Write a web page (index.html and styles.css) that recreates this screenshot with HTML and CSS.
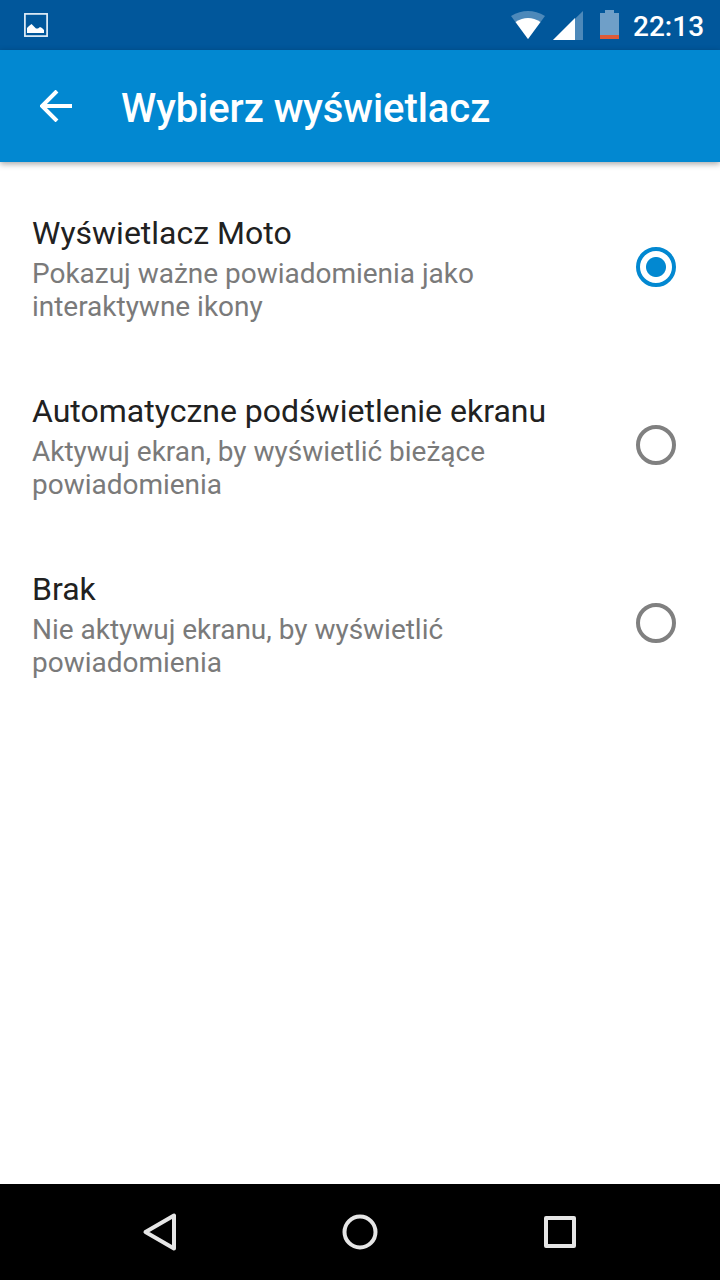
FILE: index.html
```html
<!DOCTYPE html>
<html lang="pl">
<head>
    <meta charset="UTF-8">
    <meta name="viewport" content="width=device-width, initial-scale=1.0">
    <title>Wybierz wyświetlacz</title>
    <link rel="stylesheet" href="styles.css">
</head>
<body>
    <div class="status">
        <svg class="status-image" width="24" height="24" viewBox="0 0 24 24">
            <rect x=".9" y=".9" width="22.2" height="22.2" fill="none" stroke="#e3eff8" stroke-width="1.7"/>
            <path d="M3 20v-5l2-2 2.500-2 2 2 2.500 2.500h2l2-1.500 2 1 2 2v3z" fill="#fff"/>
        </svg>
        <svg class="wifi" width="34" height="30" viewBox="0 0 34 30">
            <path d="M0 6Q17-4 34 6L17 29z" fill="#4d89ba"/>
            <path d="M4.500 12Q17 4 29.500 12L17 29z" fill="#fff"/>
        </svg>
        <svg class="signal" width="30" height="30" viewBox="0 0 30 30">
            <path d="M30 1v29H0z" fill="#4d89ba"/>
            <path d="M22 8v22H0z" fill="#fff"/>
        </svg>
        <svg class="battery" width="19" height="30" viewBox="0 0 19 30">
            <path d="M0 3h5V0h9v3h5v26H0z" fill="#6f9fc8"/>
            <path d="M0 25h19v4H0z" fill="#dd5a38"/>
        </svg>
        <span class="clock">22:13</span>
    </div>
    <header class="bar">
        <svg width="32" height="32" viewBox="0 0 32 32">
            <path d="M32 16H3M17 1L2 16l15 15" fill="none" stroke="#fff" stroke-width="4"/>
        </svg>
        <h1>Wybierz wyświetlacz</h1>
    </header>
    <main class="options">
        <label class="option">
            <span class="text">
                <span class="name">Wyświetlacz Moto</span>
                <span class="info">Pokazuj ważne powiadomienia jako<br>interaktywne ikony</span>
            </span>
            <input type="radio" name="display" checked>
        </label>
        <label class="option">
            <span class="text">
                <span class="name">Automatyczne podświetlenie ekranu</span>
                <span class="info">Aktywuj ekran, by wyświetlić bieżące<br>powiadomienia</span>
            </span>
            <input type="radio" name="display">
        </label>
        <label class="option">
            <span class="text">
                <span class="name">Brak</span>
                <span class="info">Nie aktywuj ekranu, by wyświetlić<br>powiadomienia</span>
            </span>
            <input type="radio" name="display">
        </label>
    </main>
    <nav class="nav">
        <svg width="40" height="40" viewBox="0 0 40 40"><path d="M34 3.500v33L5.500 20z"/></svg>
        <svg width="40" height="40" viewBox="0 0 40 40"><circle cx="20" cy="20" r="15.500"/></svg>
        <svg width="40" height="40" viewBox="0 0 40 40"><rect x="6" y="6" width="28" height="28"/></svg>
    </nav>
</body>
</html>
```
FILE: styles.css
```css
body {
    display: flex;
    flex-direction: column;
    height: 1280px;
    margin: 0;
    font-family: Roboto, sans-serif;
    background-color: #fff;
}

.status {
    display: flex;
    align-items: center;
    box-sizing: border-box;
    height: 50px;
    padding: 0 16px 0 24px;
    background-color: #01579b;
}

.status-image {
    margin-right: auto;
}

.signal {
    margin-left: 8px;
}

.battery {
    margin-left: 17px;
}

.clock {
    width: 71px;
    margin-left: 14px;
    padding-top: 2px;
    font-size: 28px;
    font-weight: 500;
    color: #fff;
}

.bar {
    display: flex;
    align-items: center;
    height: 112px;
    padding-left: 40px;
    background-color: #0288d1;
    box-shadow: 0 2px 6px rgba(0, 0, 0, 0.35);
}

h1 {
    margin: 4px 0 0 49px;
    font-size: 40px;
    font-weight: 500;
    letter-spacing: -0.06px;
    color: #fff;
}

.options {
    flex: 1;
    padding-top: 16px;
}

.option {
    display: flex;
    align-items: center;
    justify-content: space-between;
    height: 178px;
    padding: 0 44px 0 32px;
}

.text {
    padding-top: 3px;
}

.name {
    display: block;
    font-size: 32px;
    line-height: 38px;
    color: #212121;
}

.info {
    display: block;
    margin-top: 5px;
    font-size: 28px;
    line-height: 33px;
    letter-spacing: -0.02px;
    color: #7a7a7a;
}

input[type="radio"] {
    appearance: none;
    width: 40px;
    height: 40px;
    margin: 0;
    border: 4px solid #808080;
    border-radius: 50%;
}

input[type="radio"]:checked {
    border-color: #0288d1;
    background: radial-gradient(circle, #0288d1 9.5px, transparent 10.5px);
}

.nav {
    display: flex;
    align-items: center;
    justify-content: center;
    gap: 160px;
    height: 96px;
    background-color: #000;
}

.nav svg {
    fill: none;
    stroke: #e6e6e6;
    stroke-width: 4;
    stroke-linejoin: round;
}
```
